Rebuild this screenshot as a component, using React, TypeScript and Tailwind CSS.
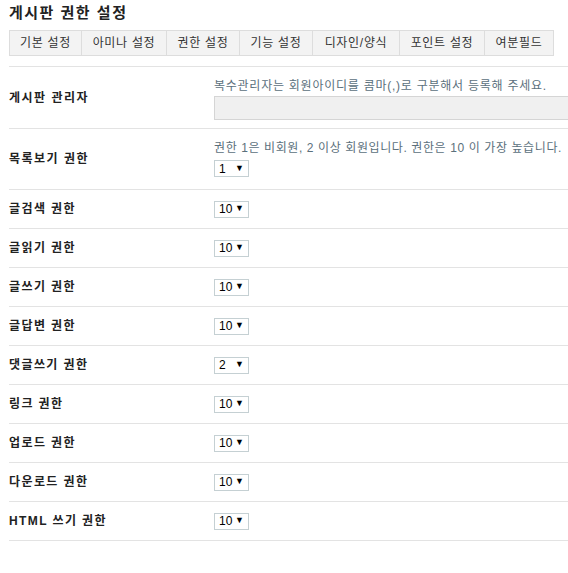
import React from "react";

const font = { fontFamily: '"Liberation Sans", "Noto Sans CJK KR", sans-serif' };

const tabs = ["기본 설정", "아미나 설정", "권한 설정", "기능 설정", "디자인/양식", "포인트 설정", "여분필드"];

const tabWidths = ["w-[73px]", "w-[85px]", "w-[73px]", "w-[73px]", "w-[87px]", "w-[85px]", "w-[69px]"];

const rows = [
  { label: "글검색 권한", value: "10" },
  { label: "글읽기 권한", value: "10" },
  { label: "글쓰기 권한", value: "10" },
  { label: "글답변 권한", value: "10" },
  { label: "댓글쓰기 권한", value: "2" },
  { label: "링크 권한", value: "10" },
  { label: "업로드 권한", value: "10" },
  { label: "다운로드 권한", value: "10" },
  { label: "HTML 쓰기 권한", value: "10" },
];

const Select = ({ value }: { value: string }) => (
  <div className="flex items-center justify-between w-[35px] h-[17px] border border-[#c5d0d3] bg-white pl-[4px] pr-[4px] text-[12px] text-black">
    <span>{value}</span>
    <span className="text-[9px]">▼</span>
  </div>
);

export default function App() {
  return (
    <div className="w-[568px] h-[573px] bg-white overflow-hidden text-[#222]" style={font}>
      <div className="pl-[9px] pt-[3px]">
        <p className="font-bold text-[15px] tracking-[1.5px] h-[19px] leading-[19px]">게시판 권한 설정</p>

        {/* tabs */}
        <div className="flex mt-[8px]">
          {tabs.map((t, i) => (
            <div
              key={t}
              className={`${tabWidths[i]} h-[26px] flex items-center justify-center bg-[#f3f3f3] border border-[#dddddd] text-[12px] tracking-[0.7px] text-[#333] ${i > 0 ? "border-l-0" : ""}`}
            >
              {t}
            </div>
          ))}
        </div>

        {/* table */}
        <div className="mt-[10px] border-t border-[#e3e3e3] text-[12px]">
          <div className="flex h-[62px] border-b border-[#e3e3e3]">
            <div className="w-[205px] flex items-center font-bold tracking-[1.5px]">게시판 관리자</div>
            <div className="flex-1 flex flex-col pt-[11px]">
              <p className="text-[#5b707c] leading-[16px] tracking-[0.75px] whitespace-nowrap">복수관리자는 회원아이디를 콤마(,)로 구분해서 등록해 주세요.</p>
              <div className="mt-[2px] h-[24px] bg-[#f0f0f0] border border-[#d5d5d5] border-r-0"></div>
            </div>
          </div>

          <div className="flex h-[61px] border-b border-[#e3e3e3]">
            <div className="w-[205px] flex items-center font-bold tracking-[1.5px]">목록보기 권한</div>
            <div className="flex-1 flex flex-col pt-[11px]">
              <p className="text-[#5b707c] leading-[16px] tracking-[0.6px] whitespace-nowrap">권한 1은 비회원, 2 이상 회원입니다. 권한은 10 이 가장 높습니다.</p>
              <div className="mt-[4px]">
                <Select value="1" />
              </div>
            </div>
          </div>

          {rows.map((r) => (
            <div key={r.label} className="flex h-[39px] items-center border-b border-[#e3e3e3]">
              <div className="w-[205px] font-bold tracking-[1.4px]">{r.label}</div>
              <Select value={r.value} />
            </div>
          ))}
        </div>
      </div>
    </div>
  );
}
